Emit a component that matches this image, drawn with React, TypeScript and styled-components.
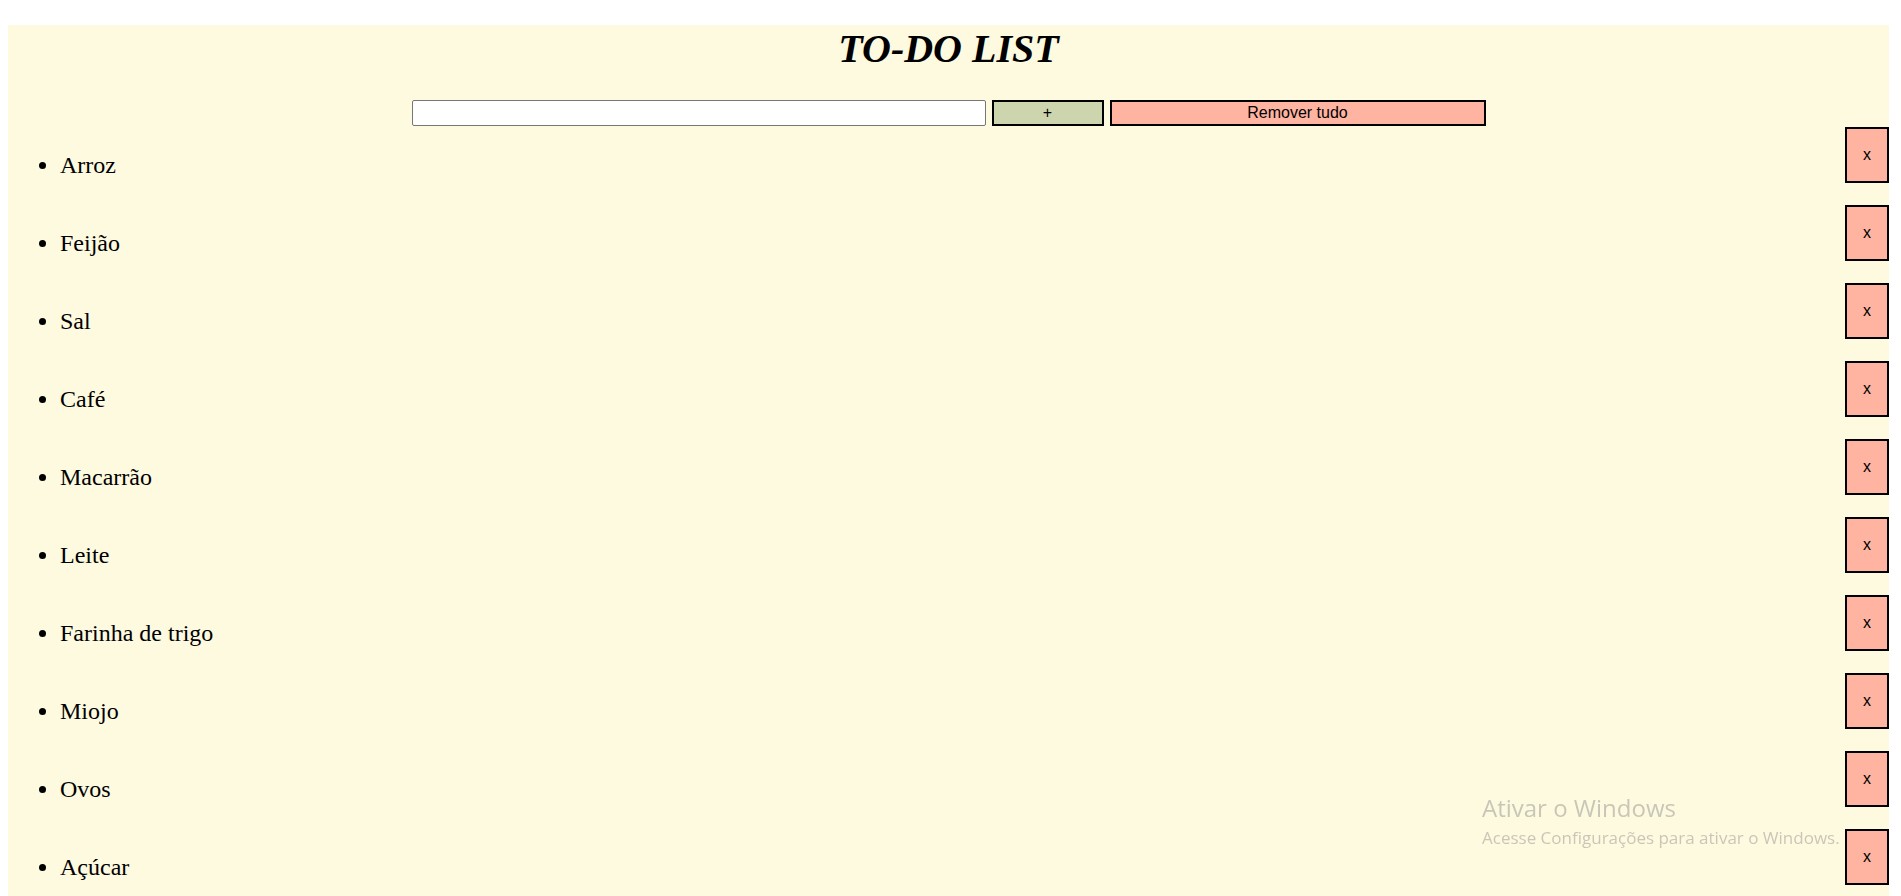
import React from "react";
import styled, { createGlobalStyle } from "styled-components";

const GlobalStyle = createGlobalStyle`
  html, body { overflow: hidden; }
  body {
    margin: 25px 12px 0 8px;
    background: #ffffff;
    font-family: "Liberation Serif", "Times New Roman", serif;
  }
`;

const Panel = styled.main`
  background: #fefae0;
  min-height: 900px;
`;

const Title = styled.h1`
  margin: 0;
  text-align: center;
  font-family: "Liberation Serif", "Times New Roman", serif;
  font-style: italic;
  font-weight: 700;
  font-size: 40px;
  color: #000;
`;

const Controls = styled.form`
  display: flex;
  justify-content: center;
  gap: 6px;
  margin-top: 28px;
`;

const TextInput = styled.input`
  box-sizing: border-box;
  width: 574px;
  height: 26px;
  border: 1px solid #767676;
  border-radius: 2px;
  background: #fff;
  padding: 1px 2px;
  font-family: "Liberation Sans", Arial, sans-serif;
  font-size: 13px;
`;

const ActionButton = styled.button<{ $bg: string; $w: number }>`
  box-sizing: border-box;
  width: ${(p) => p.$w}px;
  height: 26px;
  border: 2px solid #000;
  border-radius: 0;
  background: ${(p) => p.$bg};
  color: #000;
  font-family: "Liberation Sans", Arial, sans-serif;
  font-size: 16px;
  line-height: normal;
  padding: 0;
  cursor: pointer;
`;

const List = styled.ul`
  margin: 1px 0 0 0;
  padding: 0 0 0 52px;
  list-style: disc;
`;

const Item = styled.li`
  line-height: 76px;
  margin-bottom: 2px;
  font-size: 24px;
  color: #000;
`;

const RemoveButton = styled.button`
  float: right;
  box-sizing: border-box;
  width: 44px;
  height: 56px;
  border: 2px solid #000;
  border-radius: 0;
  background: #ffb4a2;
  color: #000;
  font-family: "Liberation Sans", Arial, sans-serif;
  font-size: 16px;
  line-height: normal;
  padding: 0;
  cursor: pointer;
`;

const Watermark = styled.div`
  position: fixed;
  left: 1482px;
  top: 793px;
  font-family: "Open Sans", "Noto Sans", sans-serif;
  color: rgba(120, 120, 120, 0.4);
  pointer-events: none;
  white-space: nowrap;
`;

const WatermarkTitle = styled.div`
  font-size: 24px;
  line-height: 30px;
`;

const WatermarkText = styled.div`
  font-size: 17px;
  line-height: 30px;
`;

const items = [
  "Arroz",
  "Feijão",
  "Sal",
  "Café",
  "Macarrão",
  "Leite",
  "Farinha de trigo",
  "Miojo",
  "Ovos",
  "Açúcar",
];

export default function App() {
  return (
    <>
      <GlobalStyle />
      <Panel>
        <Title>TO-DO LIST</Title>
        <Controls onSubmit={(e) => e.preventDefault()}>
          <TextInput type="text" />
          <ActionButton type="submit" $bg="#ccd5ae" $w={112}>
            +
          </ActionButton>
          <ActionButton type="button" $bg="#ffb4a2" $w={376}>
            Remover tudo
          </ActionButton>
        </Controls>
        <List>
          {items.map((item) => (
            <Item key={item}>
              <RemoveButton type="button">x</RemoveButton>
              {item}
            </Item>
          ))}
        </List>
      </Panel>
      <Watermark>
        <WatermarkTitle>Ativar o Windows</WatermarkTitle>
        <WatermarkText>Acesse Configurações para ativar o Windows.</WatermarkText>
      </Watermark>
    </>
  );
}
